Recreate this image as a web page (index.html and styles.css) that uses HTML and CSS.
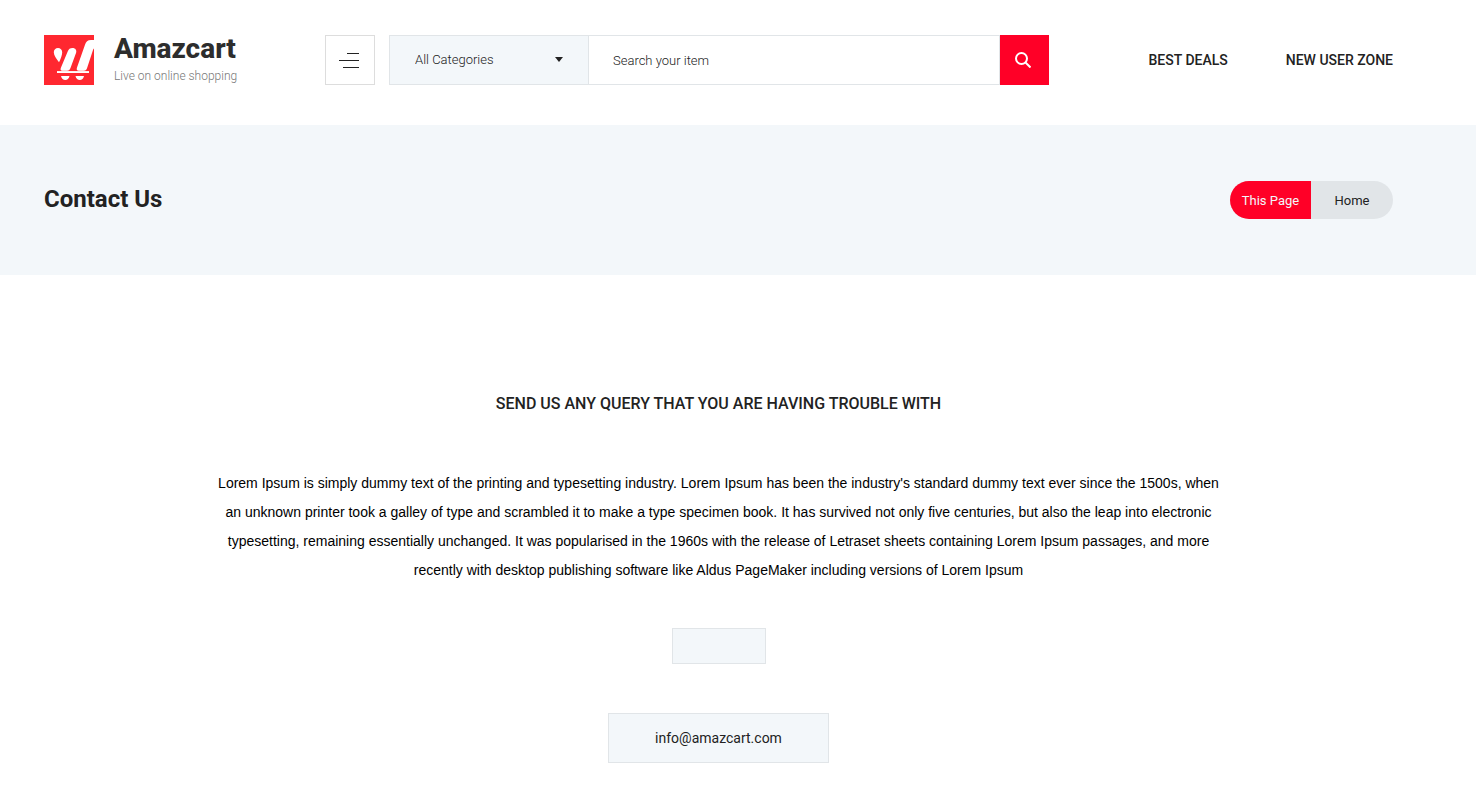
FILE: index.html
```html
<!DOCTYPE html>
<html lang="en">
<head>
<meta charset="utf-8">
<meta name="viewport" content="width=device-width, initial-scale=1">
<title>Contact Us - Amazcart</title>
<link rel="stylesheet" href="styles.css">
</head>
<body>
<header class="header">
  <a class="brand" href="#">
    <svg class="brand-mark" viewBox="0 0 50 50" aria-hidden="true">
      <rect width="50" height="50" fill="#ff2830"/>
      <path fill="#fff" d="M14 13c2.400 0 4.200 1.900 4.200 4.200 0 3-1.500 6.500-3.200 10-2.400-3.300-5.200-6.800-5.200-10 0-2.300 1.800-4.200 4.200-4.200z"/>
      <path fill="#fff" d="M28.500 13c3 0 4.400 2.200 3.600 4.800L26.500 33c-.8 2-1.800 3-3.500 3h-4.500c-2 0-2.300-1.500-1.600-3.300L23.700 16.500c1-2.400 2.300-3.500 4.800-3.500z"/>
      <path fill="#fff" d="M50 5h-3c-3.500 0-5 1.600-6 4.800L33 32.500c-.8 2.200 0 3.500 2 3.500h4.500c2 0 3-1.200 3.600-3L49 15c.3-.8.600-1.200 1-1.500z"/>
      <rect x="13" y="36" width="32" height="2" fill="#fff"/>
      <path fill="#ff2830" opacity=".4" d="M13 35.500h32v.7H13z"/>
      <path fill="#fff" d="M17 41h8.500c-.5 2.500-2.200 4-4.200 4s-3.800-1.500-4.300-4zM31.500 41h8.500c-.5 2.500-2.200 4-4.200 4s-3.800-1.500-4.300-4z"/>
    </svg>
    <span class="brand-text">
      <span class="brand-name">Amazcart</span>
      <span class="brand-tagline">Live on online shopping</span>
    </span>
  </a>
  <button class="menu-button" type="button" aria-label="Menu">
    <svg width="20" height="16" viewBox="0 0 20 16" aria-hidden="true"><path d="M8 1h12v1H8zM0 8h20v1H0zM4 15h16v1H4z" fill="#222"/></svg>
  </button>
  <form class="search" role="search">
    <div class="category">
      <select class="category-select" aria-label="Category"><option>All Categories</option></select>
      <svg class="category-caret" width="8" height="5" viewBox="0 0 8 5" aria-hidden="true"><path d="M0 0h8L4 5z" fill="#222"/></svg>
    </div>
    <input class="search-input" type="search" placeholder="Search your item" aria-label="Search your item">
    <button class="search-button" type="submit" aria-label="Search">
      <svg width="16" height="16" viewBox="0 0 16 16" fill="none" stroke="#fff" stroke-width="2" aria-hidden="true"><circle cx="6.500" cy="6.500" r="5.500"/><path d="m10.500 10.500 5 5"/></svg>
    </button>
  </form>
  <nav class="nav">
    <a href="#">BEST DEALS</a>
    <a href="#">NEW USER ZONE</a>
  </nav>
</header>
<section class="banner">
  <h1 class="banner-title">Contact Us</h1>
  <nav class="crumbs" aria-label="Breadcrumb">
    <a class="crumb crumb-current" href="#">This Page</a>
    <a class="crumb" href="#">Home</a>
  </nav>
</section>
<main class="contact">
  <h2 class="contact-title">SEND US ANY QUERY THAT YOU ARE HAVING TROUBLE WITH</h2>
  <p class="contact-text">Lorem Ipsum is simply dummy text of the printing and typesetting industry. Lorem Ipsum has been the industry's standard dummy text ever since the 1500s, when an unknown printer took a galley of type and scrambled it to make a type specimen book. It has survived not only five centuries, but also the leap into electronic typesetting, remaining essentially unchanged. It was popularised in the 1960s with the release of Letraset sheets containing Lorem Ipsum passages, and more recently with desktop publishing software like Aldus PageMaker including versions of Lorem Ipsum</p>
  <a class="contact-link contact-phone" href="#" aria-label="Phone"></a>
  <a class="contact-link" href="mailto:info@amazcart.com">info@amazcart.com</a>
</main>
</body>
</html>
```
FILE: styles.css
```css
* { box-sizing: border-box; }
body {
  margin: 0;
  background: #fff;
  color: #222;
  font-family: Roboto, sans-serif;
  font-size: 14px;
}
a { color: inherit; text-decoration: none; }
h1, h2, p { margin: 0; }

.header {
  display: flex;
  align-items: center;
  padding: 35px 83px 40px 44px;
}
.brand {
  display: flex;
  gap: 20px;
  flex: 0 0 281px;
}
.brand-mark { width: 50px; height: 50px; }
.brand-text { display: flex; flex-direction: column; gap: 5px; }
.brand-name {
  color: #2d2d2d;
  font-size: 28px;
  font-weight: 800;
  line-height: 27px;
}
.brand-tagline {
  color: #777;
  font-size: 12px;
  font-weight: 300;
  line-height: 18px;
}
.menu-button {
  display: flex;
  align-items: center;
  justify-content: center;
  flex: none;
  width: 50px;
  height: 50px;
  margin-right: 14px;
  padding: 0 2px 0 0;
  border: 1px solid #ddd;
  background: #fff;
}
.search {
  display: flex;
  flex: 1;
  height: 50px;
}
.category {
  position: relative;
  flex: 0 0 200px;
  border: 1px solid #e1e5e8;
  background: #f3f7fa;
}
.category-select {
  width: 100%;
  height: 100%;
  padding: 0 25px 2px;
  border: 0;
  appearance: none;
  background: transparent;
  color: #222;
  font: 300 13px Roboto, sans-serif;
}
.category-caret {
  position: absolute;
  top: 21px;
  right: 25px;
  pointer-events: none;
}
.search-input {
  flex: 1;
  min-width: 0;
  padding: 0 24px;
  border: 1px solid #e1e5e8;
  border-width: 1px 0;
  border-radius: 0;
  appearance: none;
  background: #fff;
  font: 300 13px Roboto, sans-serif;
}
.search-input::placeholder { color: #222; opacity: 1; }
.search-button {
  display: flex;
  align-items: center;
  justify-content: center;
  flex: 0 0 50px;
  padding: 0 4px 0 0;
  border: 0;
  border-left: 1px solid #e1e5e8;
  background: #ff0027;
}
.nav {
  display: flex;
  gap: 58px;
  margin-left: 99px;
  font-weight: 500;
  white-space: nowrap;
}

.banner {
  display: flex;
  align-items: center;
  justify-content: space-between;
  padding: 56px 83px 56px 44px;
  background: #f3f7fa;
}
.banner-title { padding-bottom: 2px; font-size: 24px; font-weight: 700; line-height: 36px; }
.crumbs {
  display: flex;
  overflow: hidden;
  border-radius: 19px;
  background: #e1e5e8;
}
.crumb {
  width: 82px;
  padding-top: 2px;
  font-size: 13px;
  line-height: 36px;
  text-align: center;
}
.crumb-current { width: 81px; background: #ff0027; color: #f3f7fa; }

.contact {
  display: flex;
  flex-direction: column;
  align-items: center;
  padding: 116px 83px 46px 44px;
}
.contact-title { font-size: 16px; font-weight: 500; line-height: 26px; }
.contact-text {
  max-width: 1012px;
  margin-top: 52px;
  color: #000;
  font-family: "Liberation Sans", Arial, sans-serif;
  font-size: 14px;
  line-height: 29px;
  text-align: center;
}
.contact-link {
  margin-top: 49px;
  padding: 0 46px;
  border: 1px solid #e1e5e8;
  background: #f3f7fa;
  line-height: 48px;
}
.contact-phone { height: 36px; margin-top: 43px; }
```
